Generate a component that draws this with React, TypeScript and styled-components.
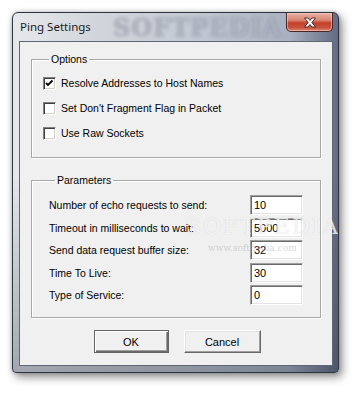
import styled, { createGlobalStyle } from "styled-components"

const GlobalStyle = createGlobalStyle`
html, body {
    margin: 0;
    padding: 0;
    background: #ffffff;
}
#root {
    width: 360px;
    height: 393px;
    overflow: hidden;
}
`

const Page = styled.div`
width: 360px;
height: 393px;
padding: 12px 0 0 12px;
box-sizing: border-box;
font-family: "Liberation Sans", Arial, sans-serif;
font-size: 10.5px;
color: #000;
`

const Window = styled.div`
width: 327px;
height: 361px;
box-sizing: border-box;
border: 1px solid #2f3540;
border-radius: 6px 6px 4px 4px;
display: flex;
flex-direction: column;
padding: 0 5px 6px 6px;
position: relative;
overflow: hidden;
box-shadow: 3px 4px 10px rgba(0, 0, 0, 0.45), 0 0 4px rgba(0, 0, 0, 0.2);
background:
    linear-gradient(to bottom, rgba(0, 0, 0, 0) 45%, rgba(40, 46, 64, 0.35) 100%),
    linear-gradient(to right, #e6e8eb 0%, #d2d6dc 25%, #c3c9d3 55%, #a9b1c1 85%, #636b82 100%);
`

const TitleBar = styled.div`
height: 28px;
display: flex;
justify-content: space-between;
align-items: flex-start;
position: relative;
flex-shrink: 0;
`

const Title = styled.span`
font-family: "Noto Sans", "Open Sans", sans-serif;
font-size: 11.5px;
color: #1a1a1a;
padding: 6px 0 0 1px;
position: relative;
z-index: 1;
`

const Watermark = styled.span`
position: absolute;
left: 94px;
top: 0px;
font-family: "DejaVu Serif", "Liberation Serif", serif;
font-size: 24px;
font-weight: bold;
letter-spacing: 1px;
color: rgba(255, 255, 255, 0.45);
text-shadow: 0 0 2px rgba(60, 70, 95, 0.7);
filter: blur(1.2px);
pointer-events: none;
`

const CloseButton = styled.div`
width: 45px;
height: 18px;
border: 1px solid #4a2525;
border-top: none;
border-radius: 0 0 5px 5px;
display: flex;
align-items: center;
justify-content: center;
background: linear-gradient(to bottom, #e8b0a4 0%, #d98672 40%, #c2412c 55%, #c8503a 80%, #dc8a74 100%);
box-shadow: inset 0 0 0 1px rgba(255, 220, 210, 0.5);
position: relative;
z-index: 1;
`

const Client = styled.div`
flex: 1;
border: 1px solid #5d6676;
background: #f0f0f0;
padding: 11px 11px 0 11px;
display: flex;
flex-direction: column;
position: relative;
`

const Group = styled.fieldset<{ $pad: string }>`
margin: 0;
padding: ${p => p.$pad};
border: 1px solid #a8a8a8;
box-shadow: 1px 1px 0 #ffffff, inset 1px 1px 0 #ffffff;
min-width: 0;
`

const Legend = styled.legend`
padding: 0 2px;
margin-left: 6px;
line-height: 13px;
font-size: 10.5px;
`

const CheckList = styled.div`
display: flex;
flex-direction: column;
gap: 12px;
`

const CheckRow = styled.label`
display: flex;
align-items: center;
gap: 5px;
height: 13px;
line-height: 13px;
`

const CheckBox = styled.span`
width: 13px;
height: 13px;
box-sizing: border-box;
background: #ffffff;
border: 1px solid;
border-color: #808080 #ffffff #ffffff #808080;
box-shadow: inset 1px 1px 0 #404040, inset -1px -1px 0 #d4d0c8;
display: flex;
align-items: center;
justify-content: center;
`

const ParamGrid = styled.div`
display: grid;
grid-template-columns: 1fr 53px;
row-gap: 2.5px;
align-items: center;
`

const ParamLabel = styled.span`
line-height: 20px;
`

const Field = styled.div`
height: 20px;
box-sizing: border-box;
background: #ffffff;
border: 1px solid;
border-color: #a0a0a0 #ffffff #ffffff #a0a0a0;
box-shadow: inset 1px 1px 0 #696969, inset -1px -1px 0 #e3e3e3;
padding: 0 3px;
line-height: 18px;
font-size: 11px;
`

const SecondGroup = styled.div`
margin-top: 16px;
display: flex;
flex-direction: column;
`

const ButtonRow = styled.div`
display: flex;
justify-content: center;
gap: 15px;
margin-top: 12px;
padding-left: 2px;
`

const Button = styled.div<{ $default?: boolean; $w: number }>`
width: ${p => p.$w}px;
height: 23px;
box-sizing: border-box;
display: flex;
align-items: center;
justify-content: center;
background: #f0f0f0;
border: 1px solid;
border-color: ${p => p.$default ? "#646464" : "#ffffff #696969 #696969 #ffffff"};
box-shadow: ${p => p.$default
    ? "inset 1px 1px 0 #ffffff, inset -1px -1px 0 #696969, inset -2px -2px 0 #a0a0a0"
    : "inset -1px -1px 0 #a0a0a0, inset 1px 1px 0 #e3e3e3"};
font-size: 11px;
`

const ClientMark = styled.div`
position: absolute;
left: 166px;
top: 173px;
display: flex;
flex-direction: column;
pointer-events: none;
`

const MarkBig = styled.span`
font-family: "DejaVu Serif", serif;
font-size: 22px;
line-height: 24px;
letter-spacing: 2px;
color: rgba(255, 255, 255, 0.75);
text-shadow: 0 0 1px rgba(120, 120, 120, 0.3);
`

const MarkSmall = styled.span`
font-family: "DejaVu Serif", serif;
font-size: 9px;
line-height: 10px;
color: rgba(160, 160, 160, 0.45);
margin: 4px 0 0 22px;
`

const options = [
    { label: "Resolve Addresses to Host Names", checked: true },
    { label: "Set Don't Fragment Flag in Packet", checked: false },
    { label: "Use Raw Sockets", checked: false },
]

const params = [
    { label: "Number of echo requests to send:", value: "10" },
    { label: "Timeout in milliseconds to wait:", value: "5000" },
    { label: "Send data request buffer size:", value: "32" },
    { label: "Time To Live:", value: "30" },
    { label: "Type of Service:", value: "0" },
]

export default function App() {
    return (
        <Page>
            <GlobalStyle />
            <Window>
                <TitleBar>
                    <Title>Ping Settings</Title>
                    <Watermark>SOFTPEDIA</Watermark>
                    <CloseButton>
                        <svg width="14" height="11" viewBox="0 0 14 11">
                            <path d="M1.5 1 H5 L7 3.5 L9 1 H12.5 L8.8 5.5 L12.5 10 H9 L7 7.5 L5 10 H1.5 L5.2 5.5 Z"
                                fill="#ffffff" stroke="#3a2020" strokeWidth="0.9" strokeLinejoin="round" />
                        </svg>
                    </CloseButton>
                </TitleBar>
                <Client>
                    <Group $pad="11px 10px 17px 11px">
                        <Legend>Options</Legend>
                        <CheckList>
                            {options.map(o => (
                                <CheckRow key={o.label}>
                                    <CheckBox>
                                        {o.checked && (
                                            <svg width="9" height="9" viewBox="0 0 9 9">
                                                <path d="M1 4 L3 6 L7.5 1.5" fill="none" stroke="#000" strokeWidth="1.8" />
                                            </svg>
                                        )}
                                    </CheckBox>
                                    {o.label}
                                </CheckRow>
                            ))}
                        </CheckList>
                    </Group>
                    <SecondGroup>
                        <Group $pad="8px 17px 12px 17px">
                            <Legend>Parameters</Legend>
                            <ParamGrid>
                                {params.map(p => (
                                    <>
                                        <ParamLabel key={p.label}>{p.label}</ParamLabel>
                                        <Field key={p.label + "v"}>{p.value}</Field>
                                    </>
                                ))}
                            </ParamGrid>
                        </Group>
                    </SecondGroup>
                    <ButtonRow>
                        <Button $default $w={75}>OK</Button>
                        <Button $w={77}>Cancel</Button>
                    </ButtonRow>
                    <ClientMark>
                        <MarkBig>SOFTPEDIA</MarkBig>
                        <MarkSmall>www.softpedia.com</MarkSmall>
                    </ClientMark>
                </Client>
            </Window>
        </Page>
    )
}
